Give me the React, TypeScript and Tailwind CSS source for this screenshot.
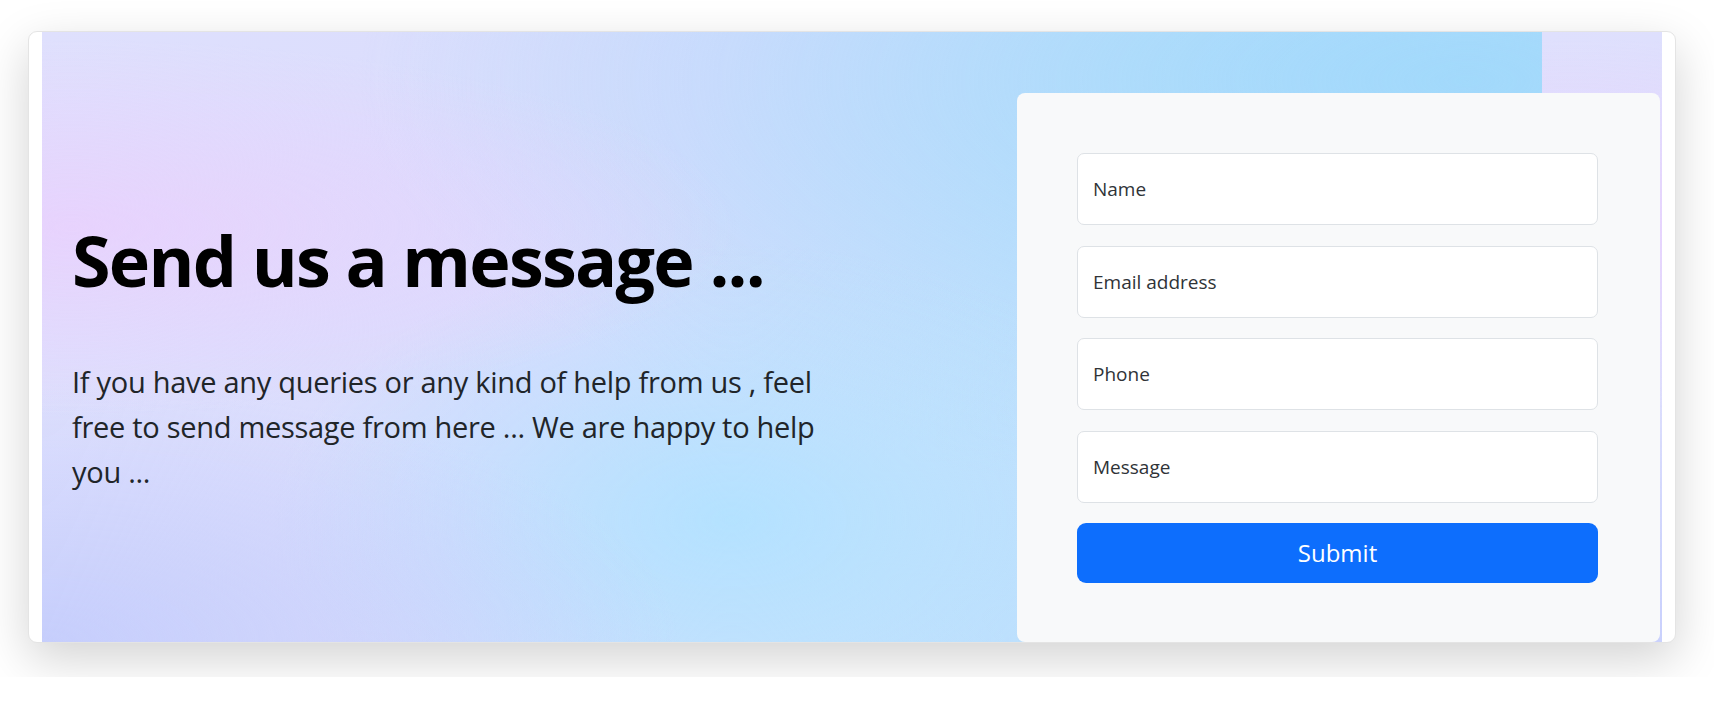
import { useState } from "react"

const fields = ["Name", "Email address", "Phone", "Message"]

export default function App() {
  const [values, setValues] = useState<Record<string, string>>({})

  return (
    <div className="h-[677px] overflow-hidden bg-white font-['Open_Sans',sans-serif]">
      <div className="ml-[28px] mt-[31px] h-[612px] w-[1648px] rounded-[9px] border border-[#e4e4e4] bg-white px-[13px] shadow-[0_16px_48px_rgba(0,0,0,0.175)]">
        <div className="flex h-full bg-[#dcdcfc] bg-[image:radial-gradient(ellipse_at_2%_32%,rgba(232,210,253,0.95)_0%,rgba(232,210,253,0)_32%),radial-gradient(ellipse_at_0%_100%,rgba(198,206,252,1)_0%,rgba(198,206,252,0)_30%),radial-gradient(ellipse_at_46%_80%,rgba(180,226,255,1)_0%,rgba(180,226,255,0)_40%),radial-gradient(ellipse_at_95%_8%,rgba(162,217,251,1)_0%,rgba(162,217,251,0)_55%),linear-gradient(120deg,#dfe0fd_0%,#d9dcfd_38%,#c8e1fd_60%,#abdafb_100%)] bg-[length:1500px_100%] bg-repeat-x">
          <div className="w-[945px] shrink-0 pl-[30px] pt-[186px]">
            <h1 className="text-[70px] font-bold leading-[1.2] tracking-[-0.025em] text-black">
              Send us a message ...
            </h1>
            <p className="mt-[57px] w-[770px] text-[29px] font-normal leading-[45px] tracking-[-0.01em] text-[#212529]">
              If you have any queries or any kind of help from us , feel free to send message from here ... We are
              happy to help you ...
            </p>
          </div>
          <div className="flex flex-1 flex-col pl-[30px] pr-[2px] pt-[61px]">
            <form
              className="flex flex-1 flex-col gap-[20.5px] rounded-lg bg-[#f8f9fa] pl-[60px] pr-[62px] pt-[60px]"
              onSubmit={(e) => e.preventDefault()}
            >
              {fields.map((field) => (
                <input
                  key={field}
                  type="text"
                  placeholder={field}
                  value={values[field] ?? ""}
                  onChange={(e) => setValues({ ...values, [field]: e.target.value })}
                  className="h-[72px] w-full rounded-[7px] border border-[#dee2e6] bg-white px-[15px] text-[19px] text-[#212529] outline-none placeholder:text-[#2f3337]"
                />
              ))}
              <button
                type="submit"
                className="h-[60px] w-full rounded-[9px] bg-[#0d6efd] text-[24px] text-white"
              >
                Submit
              </button>
            </form>
          </div>
        </div>
      </div>
    </div>
  )
}
